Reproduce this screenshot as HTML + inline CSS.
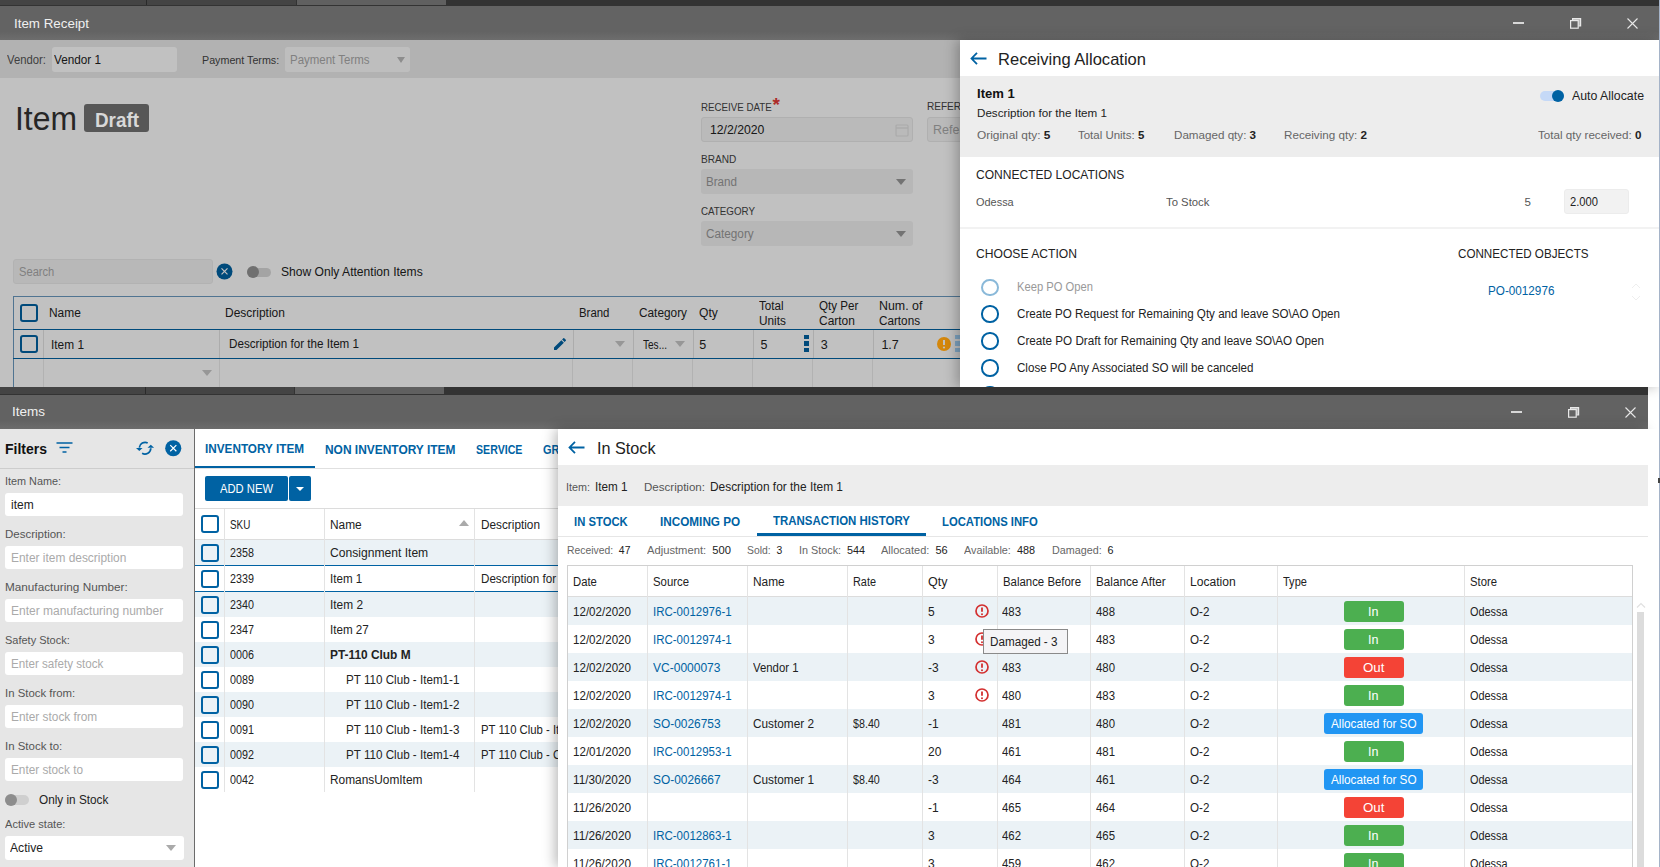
<!DOCTYPE html><html><head><meta charset="utf-8"><style>
*{box-sizing:border-box}
body{margin:0;width:1660px;height:867px;overflow:hidden;position:relative;background:#fff;font-family:"Liberation Sans",sans-serif}
.t{position:absolute;white-space:nowrap}
.b{position:absolute}
</style></head><body><div class="b" style="left:0px;top:0px;width:1660px;height:6px;background:#333"></div>
<div class="b" style="left:0px;top:0px;width:296px;height:5px;background:#444"></div>
<div class="b" style="left:146px;top:0px;width:1px;height:5px;background:#2a2a2a"></div>
<div class="b" style="left:297px;top:0px;width:149px;height:5px;background:#606060"></div>
<div class="b" style="left:0px;top:6px;width:1659px;height:34px;background:linear-gradient(#636363 0,#636363 75%,#6d6d6d 100%)"></div>
<div id="x1" class="t" style="left:13.5px;top:14.0px;font-size:13.5px;color:#f0f0f0;font-weight:normal;line-height:20px;transform:scaleX(0.9897);transform-origin:0 0;">Item Receipt</div>
<div class="b" style="left:1513px;top:21.5px;width:11px;height:2px;background:#d8d8d8"></div>
<svg class="b" style="left:1570px;top:18px" width="12" height="12" viewBox="0 0 12 12"><path d="M2.6 2.6V0.6h8v7.4H8.4" fill="#b8b8b8" stroke="#e8e8e8" stroke-width="1.2"/><rect x="0.6" y="2.6" width="7.6" height="7.6" fill="#646464" stroke="#e8e8e8" stroke-width="1.2"/></svg>
<svg class="b" style="left:1627px;top:17.5px" width="11" height="11" viewBox="0 0 11 11"><path d="M0.5 0.5L10.5 10.5M10.5 0.5L0.5 10.5" stroke="#e8e8e8" stroke-width="1.1"/></svg>
<div class="b" style="left:0;top:40px;width:1660px;height:347px;overflow:hidden;background:#fff">
<div class="b" style="left:0px;top:0px;width:960px;height:38px;background:#ececec"></div>
<div id="x2" class="t" style="left:7px;top:9.5px;font-size:12px;color:#555;font-weight:normal;line-height:20px;transform:scaleX(0.9426);transform-origin:0 0;">Vendor:</div>
<div class="b" style="left:52px;top:7px;width:125px;height:25px;background:#fff;border-radius:3px"></div>
<div id="x3" class="t" style="left:54px;top:9.5px;font-size:12.5px;color:#222;font-weight:normal;line-height:20px;transform:scaleX(0.9391);transform-origin:0 0;">Vendor 1</div>
<div id="x4" class="t" style="left:202.4px;top:9.5px;font-size:11.5px;color:#444;font-weight:normal;line-height:20px;transform:scaleX(0.9315);transform-origin:0 0;">Payment Terms:</div>
<div class="b" style="left:285px;top:7px;width:125px;height:25px;background:#fcfcfc;border-radius:3px"></div>
<div id="x5" class="t" style="left:290px;top:9.5px;font-size:12.5px;color:#aaa;font-weight:normal;line-height:20px;transform:scaleX(0.9179);transform-origin:0 0;">Payment Terms</div>
<div class="b" style="left:396.5px;top:17px;width:0;height:0;border-left:4.5px solid transparent;border-right:4.5px solid transparent;border-top:6px solid #bbb"></div>
<div id="x6" class="t" style="left:14.5px;top:57.8px;font-size:34px;color:#333;font-weight:normal;line-height:40px;transform:scaleX(0.9376);transform-origin:0 0;">Item</div>
<div id="x7" class="t" style="left:701px;top:57.0px;font-size:11.5px;color:#444;font-weight:normal;line-height:20px;transform:scaleX(0.8479);transform-origin:0 0;">RECEIVE DATE</div>
<div id="x8" class="t" style="left:772.5px;top:58.0px;font-size:19px;color:#e53935;font-weight:bold;line-height:14px;">*</div>
<div class="b" style="left:701px;top:77px;width:212px;height:25px;background:#f6f6f6;border:1px solid #e9e9e9;border-radius:3px"></div>
<div id="x9" class="t" style="left:710px;top:79.5px;font-size:12.5px;color:#222;font-weight:normal;line-height:20px;transform:scaleX(0.9783);transform-origin:0 0;">12/2/2020</div>
<svg class="b" style="left:895px;top:83px" width="14" height="14" viewBox="0 0 14 14"><rect x="1" y="2" width="12" height="11" rx="1" fill="none" stroke="#e2e2e2" stroke-width="1.2"/><path d="M1 5h12" stroke="#e2e2e2" stroke-width="1.5"/></svg>
<div id="x10" class="t" style="left:927px;top:56.0px;font-size:11.5px;color:#444;font-weight:normal;line-height:20px;transform:scaleX(0.8740);transform-origin:0 0;">REFERENCE</div>
<div class="b" style="left:927px;top:77px;width:200px;height:25px;background:#f6f6f6;border:1px solid #e9e9e9;border-radius:3px"></div>
<div id="x11" class="t" style="left:933px;top:79.5px;font-size:12.5px;color:#aaa;font-weight:normal;line-height:20px;">Reference</div>
<div id="x12" class="t" style="left:701px;top:109.0px;font-size:11.5px;color:#444;font-weight:normal;line-height:20px;transform:scaleX(0.8767);transform-origin:0 0;">BRAND</div>
<div class="b" style="left:701px;top:129px;width:212px;height:25px;background:#f2f2f2;border-radius:3px"></div>
<div id="x13" class="t" style="left:705.6px;top:131.5px;font-size:12.5px;color:#999;font-weight:normal;line-height:20px;transform:scaleX(0.9293);transform-origin:0 0;">Brand</div>
<div class="b" style="left:896px;top:139px;width:0;height:0;border-left:5.0px solid transparent;border-right:5.0px solid transparent;border-top:6px solid #999"></div>
<div id="x14" class="t" style="left:701px;top:161.0px;font-size:11.5px;color:#444;font-weight:normal;line-height:20px;transform:scaleX(0.8506);transform-origin:0 0;">CATEGORY</div>
<div class="b" style="left:701px;top:181px;width:212px;height:25px;background:#f2f2f2;border-radius:3px"></div>
<div id="x15" class="t" style="left:705.6px;top:183.5px;font-size:12.5px;color:#999;font-weight:normal;line-height:20px;transform:scaleX(0.9402);transform-origin:0 0;">Category</div>
<div class="b" style="left:896px;top:191px;width:0;height:0;border-left:5.0px solid transparent;border-right:5.0px solid transparent;border-top:6px solid #999"></div>
<div class="b" style="left:13px;top:219px;width:200px;height:25px;background:#f4f4f4;border:1px solid #ececec;border-radius:3px"></div>
<div id="x16" class="t" style="left:19px;top:221.5px;font-size:12.5px;color:#aaa;font-weight:normal;line-height:20px;transform:scaleX(0.8912);transform-origin:0 0;">Search</div>
<svg class="b" style="left:215.5px;top:222.5px" width="17" height="17" viewBox="0 0 17 17"><circle cx="8.5" cy="8.5" r="8" fill="#0062a3"/><path d="M5.5 5.3l6 6M11.5 5.3l-6 6" stroke="#fff" stroke-width="1.2"/></svg>
<div class="b" style="left:247px;top:227.5px;width:24px;height:9px;background:#d9d9d9;border-radius:5px"></div>
<div class="b" style="left:247px;top:225.5px;width:12px;height:12px;border-radius:50%;background:#959595"></div>
<div id="x17" class="t" style="left:281px;top:221.5px;font-size:12px;color:#222;font-weight:normal;line-height:20px;transform:scaleX(1.0067);transform-origin:0 0;">Show Only Attention Items</div>
<div class="b" style="left:13px;top:256px;width:960px;height:1px;background:#6a9ac0"></div>
<div class="b" style="left:13px;top:256px;width:1px;height:91px;background:#6a9ac0"></div>
<div class="b" style="left:13px;top:289px;width:960px;height:1px;background:#0062a3"></div>
<div class="b" style="left:13px;top:318px;width:960px;height:1px;background:#0062a3"></div>
<div class="b" style="left:20px;top:264px;width:18px;height:18px;border:2px solid #0062a3;border-radius:3px"></div>
<div class="b" style="left:20px;top:295px;width:18px;height:18px;border:2px solid #0062a3;border-radius:3px"></div>
<div id="x18" class="t" style="left:49.2px;top:263.0px;font-size:12.5px;color:#222;font-weight:normal;line-height:20px;transform:scaleX(0.9537);transform-origin:0 0;">Name</div>
<div id="x19" class="t" style="left:225px;top:263.0px;font-size:12.5px;color:#222;font-weight:normal;line-height:20px;transform:scaleX(0.9579);transform-origin:0 0;">Description</div>
<div id="x20" class="t" style="left:579.2px;top:263.0px;font-size:12.5px;color:#222;font-weight:normal;line-height:20px;transform:scaleX(0.9113);transform-origin:0 0;">Brand</div>
<div id="x21" class="t" style="left:639px;top:263.0px;font-size:12.5px;color:#222;font-weight:normal;line-height:20px;transform:scaleX(0.9461);transform-origin:0 0;">Category</div>
<div id="x22" class="t" style="left:699px;top:263.0px;font-size:12.5px;color:#222;font-weight:normal;line-height:20px;transform:scaleX(0.9664);transform-origin:0 0;">Qty</div>
<div id="x23" class="t" style="left:759px;top:255.5px;font-size:12.5px;color:#222;font-weight:normal;line-height:20px;transform:scaleX(0.9316);transform-origin:0 0;">Total</div>
<div id="x24" class="t" style="left:759px;top:271.0px;font-size:12.5px;color:#222;font-weight:normal;line-height:20px;transform:scaleX(0.9444);transform-origin:0 0;">Units</div>
<div id="x25" class="t" style="left:819px;top:255.5px;font-size:12.5px;color:#222;font-weight:normal;line-height:20px;transform:scaleX(0.9274);transform-origin:0 0;">Qty Per</div>
<div id="x26" class="t" style="left:819px;top:271.0px;font-size:12.5px;color:#222;font-weight:normal;line-height:20px;transform:scaleX(0.9565);transform-origin:0 0;">Carton</div>
<div id="x27" class="t" style="left:879px;top:255.5px;font-size:12.5px;color:#222;font-weight:normal;line-height:20px;transform:scaleX(0.9916);transform-origin:0 0;">Num. of</div>
<div id="x28" class="t" style="left:879px;top:271.0px;font-size:12.5px;color:#222;font-weight:normal;line-height:20px;transform:scaleX(0.9365);transform-origin:0 0;">Cartons</div>
<div class="b" style="left:43px;top:290px;width:1px;height:28px;background:#e3e3e3"></div>
<div class="b" style="left:43px;top:319px;width:1px;height:28px;background:#ececec"></div>
<div class="b" style="left:219px;top:290px;width:1px;height:28px;background:#e3e3e3"></div>
<div class="b" style="left:219px;top:319px;width:1px;height:28px;background:#ececec"></div>
<div class="b" style="left:573px;top:290px;width:1px;height:28px;background:#e3e3e3"></div>
<div class="b" style="left:572px;top:319px;width:1px;height:28px;background:#ececec"></div>
<div class="b" style="left:633px;top:290px;width:1px;height:28px;background:#e3e3e3"></div>
<div class="b" style="left:632px;top:319px;width:1px;height:28px;background:#ececec"></div>
<div class="b" style="left:693px;top:290px;width:1px;height:28px;background:#e3e3e3"></div>
<div class="b" style="left:692px;top:319px;width:1px;height:28px;background:#ececec"></div>
<div class="b" style="left:753px;top:290px;width:1px;height:28px;background:#e3e3e3"></div>
<div class="b" style="left:752px;top:319px;width:1px;height:28px;background:#ececec"></div>
<div class="b" style="left:813px;top:290px;width:1px;height:28px;background:#e3e3e3"></div>
<div class="b" style="left:812px;top:319px;width:1px;height:28px;background:#ececec"></div>
<div class="b" style="left:873px;top:290px;width:1px;height:28px;background:#e3e3e3"></div>
<div class="b" style="left:872px;top:319px;width:1px;height:28px;background:#ececec"></div>
<div id="x29" class="t" style="left:51.4px;top:294.5px;font-size:12.5px;color:#222;font-weight:normal;line-height:20px;transform:scaleX(0.9496);transform-origin:0 0;">Item 1</div>
<div id="x30" class="t" style="left:228.5px;top:294.0px;font-size:12px;color:#222;font-weight:normal;line-height:20px;transform:scaleX(0.9697);transform-origin:0 0;">Description for the Item 1</div>
<svg class="b" style="left:552px;top:296px" width="16" height="16" viewBox="0 0 24 24"><path d="M3 17.25V21h3.75L17.81 9.94l-3.75-3.75L3 17.25zM20.71 7.04a1 1 0 000-1.41l-2.34-2.34a1 1 0 00-1.41 0l-1.83 1.83 3.75 3.75 1.83-1.83z" fill="#0062a3"/></svg>
<div class="b" style="left:614.5px;top:301px;width:0;height:0;border-left:5.0px solid transparent;border-right:5.0px solid transparent;border-top:6.5px solid #c8c8c8"></div>
<div id="x31" class="t" style="left:642.5px;top:294.5px;font-size:12.5px;color:#222;font-weight:normal;line-height:20px;transform:scaleX(0.8033);transform-origin:0 0;">Tes...</div>
<div class="b" style="left:674.5px;top:301px;width:0;height:0;border-left:5.0px solid transparent;border-right:5.0px solid transparent;border-top:6.5px solid #c8c8c8"></div>
<div id="x32" class="t" style="left:699.2px;top:294.5px;font-size:12.5px;color:#222;font-weight:normal;line-height:20px;">5</div>
<div id="x33" class="t" style="left:760.5px;top:294.5px;font-size:12.5px;color:#222;font-weight:normal;line-height:20px;">5</div>
<div class="b" style="left:804px;top:294.5px;width:5px;height:4.5px;background:#0062a3"></div>
<div class="b" style="left:804px;top:301.2px;width:5px;height:4.5px;background:#0062a3"></div>
<div class="b" style="left:804px;top:307.9px;width:5px;height:4.5px;background:#0062a3"></div>
<div id="x34" class="t" style="left:820.7px;top:294.5px;font-size:12.5px;color:#222;font-weight:normal;line-height:20px;">3</div>
<div id="x35" class="t" style="left:881.4px;top:294.5px;font-size:12.5px;color:#222;font-weight:normal;line-height:20px;">1.7</div>
<div class="b" style="left:202px;top:330px;width:0;height:0;border-left:5.0px solid transparent;border-right:5.0px solid transparent;border-top:6.5px solid #c8c8c8"></div>
</div>
<div class="b" style="left:0px;top:40px;width:1660px;height:347px;background:rgba(0,0,0,0.243)"></div>
<div class="b" style="left:84px;top:104px;width:65px;height:28px;background:#575757;border-radius:3px"></div>
<div id="x36" class="t" style="left:94.8px;top:105.5px;font-size:20px;color:#d8d8d8;font-weight:bold;line-height:28px;transform:scaleX(0.9428);transform-origin:0 0;">Draft</div>
<svg class="b" style="left:936.5px;top:336.5px" width="14" height="14" viewBox="0 0 14 14"><circle cx="7" cy="7" r="7" fill="#d4870c"/><path d="M7 3v5" stroke="#c1c1c1" stroke-width="2"/><circle cx="7" cy="10.5" r="1.1" fill="#c1c1c1"/></svg>
<div class="b" style="left:955px;top:334.5px;width:5px;height:4.5px;background:#7ea3c0"></div>
<div class="b" style="left:955px;top:341.2px;width:5px;height:4.5px;background:#7ea3c0"></div>
<div class="b" style="left:955px;top:347.9px;width:5px;height:4.5px;background:#7ea3c0"></div>
<div class="b" style="left:960px;top:40px;width:700px;height:347px;background:#fff;box-shadow:-3px 0 12px rgba(0,0,0,0.28);overflow:hidden">
<svg class="b" style="left:10px;top:12.4px" width="17" height="13" viewBox="0 0 17 13"><path d="M16.5 6.5H1.8M7 0.8L1.5 6.5l5.5 5.7" fill="none" stroke="#0062a3" stroke-width="1.8"/></svg>
<div id="x37" class="t" style="left:38.4px;top:9.0px;font-size:16.5px;color:#222;font-weight:normal;line-height:20px;transform:scaleX(1.0022);transform-origin:0 0;">Receiving Allocation</div>
<div class="b" style="left:0px;top:36px;width:700px;height:81px;background:#ededed"></div>
<div id="x38" class="t" style="left:16.5px;top:44.3px;font-size:13.5px;color:#111;font-weight:bold;line-height:20px;transform:scaleX(0.9685);transform-origin:0 0;">Item 1</div>
<div id="x39" class="t" style="left:16.5px;top:62.5px;font-size:11.6px;color:#222;font-weight:normal;line-height:20px;transform:scaleX(1.0036);transform-origin:0 0;">Description for the Item 1</div>
<div id="x40" class="t" style="left:16.5px;top:84.5px;font-size:11.5px;color:#666;font-weight:normal;line-height:20px;transform:scaleX(1.0343);transform-origin:0 0;">Original qty: <b style="color:#222">5</b></div>
<div id="x41" class="t" style="left:118.3px;top:84.5px;font-size:11.5px;color:#666;font-weight:normal;line-height:20px;transform:scaleX(0.9972);transform-origin:0 0;">Total Units: <b style="color:#222">5</b></div>
<div id="x42" class="t" style="left:213.6px;top:84.5px;font-size:11.5px;color:#666;font-weight:normal;line-height:20px;transform:scaleX(1.0110);transform-origin:0 0;">Damaged qty: <b style="color:#222">3</b></div>
<div id="x43" class="t" style="left:324px;top:84.5px;font-size:11.5px;color:#666;font-weight:normal;line-height:20px;transform:scaleX(1.0141);transform-origin:0 0;">Receiving qty: <b style="color:#222">2</b></div>
<div id="x44" class="t" style="left:577.5px;top:84.5px;font-size:11.5px;color:#666;font-weight:normal;line-height:20px;transform:scaleX(1.0108);transform-origin:0 0;">Total qty received: <b style="color:#222">0</b></div>
<div class="b" style="left:580px;top:50.5px;width:24px;height:10px;background:#c5d9f7;border-radius:5px"></div>
<div class="b" style="left:591.5px;top:49.5px;width:12px;height:12px;border-radius:50%;background:#0062a3"></div>
<div id="x45" class="t" style="left:612px;top:45.5px;font-size:12.5px;color:#222;font-weight:normal;line-height:20px;transform:scaleX(0.9867);transform-origin:0 0;">Auto Allocate</div>
<div id="x46" class="t" style="left:16px;top:124.5px;font-size:12.5px;color:#222;font-weight:normal;line-height:20px;transform:scaleX(0.9633);transform-origin:0 0;">CONNECTED LOCATIONS</div>
<div id="x47" class="t" style="left:16px;top:152.0px;font-size:11.5px;color:#555;font-weight:normal;line-height:20px;transform:scaleX(0.9510);transform-origin:0 0;">Odessa</div>
<div id="x48" class="t" style="left:206.4px;top:152.0px;font-size:11.5px;color:#555;font-weight:normal;line-height:20px;transform:scaleX(0.9839);transform-origin:0 0;">To Stock</div>
<div id="x49" class="t" style="left:564.6px;top:152.0px;font-size:11.5px;color:#555;font-weight:normal;line-height:20px;">5</div>
<div class="b" style="left:603.6px;top:149px;width:65px;height:25px;background:#f2f2f2;border:1px solid #ececec;border-radius:3px"></div>
<div id="x50" class="t" style="left:610px;top:152.0px;font-size:12px;color:#222;font-weight:normal;line-height:20px;transform:scaleX(0.9324);transform-origin:0 0;">2.000</div>
<div class="b" style="left:0px;top:187px;width:700px;height:2px;background:#f2f2f2"></div>
<div id="x51" class="t" style="left:16.4px;top:203.5px;font-size:12.5px;color:#222;font-weight:normal;line-height:20px;transform:scaleX(0.9694);transform-origin:0 0;">CHOOSE ACTION</div>
<div id="x52" class="t" style="left:498.2px;top:203.5px;font-size:12.5px;color:#222;font-weight:normal;line-height:20px;transform:scaleX(0.9302);transform-origin:0 0;">CONNECTED OBJECTS</div>
<div class="b" style="left:21.4px;top:238.6px;width:17.2px;height:17.2px;border-radius:50%;border:2px solid #8ab9d9"></div>
<div id="x53" class="t" style="left:56.6px;top:237.2px;font-size:12px;color:#999;font-weight:normal;line-height:20px;transform:scaleX(0.9338);transform-origin:0 0;">Keep PO Open</div>
<div class="b" style="left:21.4px;top:265.4px;width:17.2px;height:17.2px;border-radius:50%;border:2px solid #0062a3"></div>
<div id="x54" class="t" style="left:56.6px;top:264.0px;font-size:12px;color:#222;font-weight:normal;line-height:20px;transform:scaleX(0.9666);transform-origin:0 0;">Create PO Request for Remaining Qty and leave SO\AO Open</div>
<div class="b" style="left:21.4px;top:292.4px;width:17.2px;height:17.2px;border-radius:50%;border:2px solid #0062a3"></div>
<div id="x55" class="t" style="left:56.6px;top:291.0px;font-size:12px;color:#222;font-weight:normal;line-height:20px;transform:scaleX(0.9731);transform-origin:0 0;">Create PO Draft for Remaining Qty and leave SO\AO Open</div>
<div class="b" style="left:21.4px;top:319.4px;width:17.2px;height:17.2px;border-radius:50%;border:2px solid #0062a3"></div>
<div id="x56" class="t" style="left:56.6px;top:318.0px;font-size:12px;color:#222;font-weight:normal;line-height:20px;transform:scaleX(0.9661);transform-origin:0 0;">Close PO Any Associated SO will be canceled</div>
<div class="b" style="left:21.4px;top:346.4px;width:17.2px;height:17.2px;border-radius:50%;border:2px solid #0062a3"></div>
<div id="x57" class="t" style="left:528.4px;top:240.5px;font-size:12.5px;color:#0062a3;font-weight:normal;line-height:20px;transform:scaleX(0.9367);transform-origin:0 0;">PO-0012976</div>
<svg class="b" style="left:671px;top:242px" width="10" height="20" viewBox="0 0 10 20"><path d="M1 6l4-4 4 4M1 14l4 4 4-4" fill="none" stroke="#eee" stroke-width="1"/></svg>
</div>
<div class="b" style="left:1659px;top:0px;width:1px;height:867px;background:#a5b3c8"></div>
<div class="b" style="left:0px;top:387px;width:1648px;height:8px;background:#333"></div>
<div class="b" style="left:0px;top:387px;width:145px;height:7px;background:#444"></div>
<div class="b" style="left:145px;top:387px;width:149px;height:7px;background:#444;border-left:1px solid #2a2a2a"></div>
<div class="b" style="left:295px;top:387px;width:149px;height:7px;background:#606060"></div>
<div class="b" style="left:0px;top:395px;width:1648px;height:34px;background:linear-gradient(#626262 0,#626262 75%,#6c6c6c 100%)"></div>
<div id="x58" class="t" style="left:11.5px;top:402.0px;font-size:13.5px;color:#f0f0f0;font-weight:normal;line-height:20px;transform:scaleX(0.9995);transform-origin:0 0;">Items</div>
<div class="b" style="left:1511px;top:410.5px;width:11px;height:2px;background:#d8d8d8"></div>
<svg class="b" style="left:1568px;top:407px" width="12" height="12" viewBox="0 0 12 12"><path d="M2.6 2.6V0.6h8v7.4H8.4" fill="#b8b8b8" stroke="#e8e8e8" stroke-width="1.2"/><rect x="0.6" y="2.6" width="7.6" height="7.6" fill="#646464" stroke="#e8e8e8" stroke-width="1.2"/></svg>
<svg class="b" style="left:1625px;top:406.5px" width="11" height="11" viewBox="0 0 11 11"><path d="M0.5 0.5L10.5 10.5M10.5 0.5L0.5 10.5" stroke="#e8e8e8" stroke-width="1.1"/></svg>
<div class="b" style="left:0px;top:429px;width:194px;height:438px;background:#e6e6e6"></div>
<div class="b" style="left:194px;top:429px;width:1px;height:438px;background:#6b6b6b"></div>
<div id="x59" class="t" style="left:5px;top:438.7px;font-size:15.5px;color:#111;font-weight:bold;line-height:20px;transform:scaleX(0.9029);transform-origin:0 0;">Filters</div>
<svg class="b" style="left:56px;top:442px" width="17" height="11" viewBox="0 0 17 11"><path d="M0.5 1h16M3.5 5.5h10M6.5 10h4" stroke="#0062a3" stroke-width="1.7"/></svg>
<svg class="b" style="left:130px;top:436px" width="26" height="26" viewBox="0 0 26 26"><path d="M17.7 6.9A5.9 5.9 0 0 0 9.3 11.6M12.1 17.3A5.9 5.9 0 0 0 20.8 12.2" fill="none" stroke="#0062a3" stroke-width="1.7"/><path d="M6 12.1h6.6l-3.3 3z M17.5 11.7h6.6l-3.3-3z" fill="#0062a3"/></svg>
<svg class="b" style="left:165px;top:440px" width="16.5" height="16.5" viewBox="0 0 17 17"><circle cx="8.5" cy="8.5" r="8.3" fill="#0062a3"/><path d="M5.4 5.3l6.3 6.3M11.7 5.3l-6.3 6.3" stroke="#fff" stroke-width="1.2"/></svg>
<div class="b" style="left:0px;top:468px;width:194px;height:1px;background:#cdcdcd"></div>
<div id="x60" class="t" style="left:5px;top:471.0px;font-size:11.5px;color:#555;font-weight:normal;line-height:20px;transform:scaleX(0.9422);transform-origin:0 0;">Item Name:</div>
<div class="b" style="left:5px;top:493px;width:178px;height:23px;background:#fff;border-radius:3px"></div>
<div id="x61" class="t" style="left:11px;top:494.5px;font-size:12.5px;color:#222;font-weight:normal;line-height:20px;transform:scaleX(0.9566);transform-origin:0 0;">item</div>
<div id="x62" class="t" style="left:5px;top:524.0px;font-size:11.5px;color:#555;font-weight:normal;line-height:20px;transform:scaleX(0.9997);transform-origin:0 0;">Description:</div>
<div class="b" style="left:5px;top:546px;width:178px;height:23px;background:#fff;border-radius:3px"></div>
<div id="x63" class="t" style="left:11px;top:547.5px;font-size:12.5px;color:#aaa;font-weight:normal;line-height:20px;transform:scaleX(0.9538);transform-origin:0 0;">Enter item description</div>
<div id="x64" class="t" style="left:5px;top:577.0px;font-size:11.5px;color:#555;font-weight:normal;line-height:20px;transform:scaleX(1.0210);transform-origin:0 0;">Manufacturing Number:</div>
<div class="b" style="left:5px;top:599px;width:178px;height:23px;background:#fff;border-radius:3px"></div>
<div id="x65" class="t" style="left:11px;top:600.5px;font-size:12.5px;color:#aaa;font-weight:normal;line-height:20px;transform:scaleX(0.9607);transform-origin:0 0;">Enter manufacturing number</div>
<div id="x66" class="t" style="left:5px;top:630.0px;font-size:11.5px;color:#555;font-weight:normal;line-height:20px;transform:scaleX(0.9548);transform-origin:0 0;">Safety Stock:</div>
<div class="b" style="left:5px;top:652px;width:178px;height:23px;background:#fff;border-radius:3px"></div>
<div id="x67" class="t" style="left:11px;top:653.5px;font-size:12.5px;color:#aaa;font-weight:normal;line-height:20px;transform:scaleX(0.9300);transform-origin:0 0;">Enter safety stock</div>
<div id="x68" class="t" style="left:5px;top:683.0px;font-size:11.5px;color:#555;font-weight:normal;line-height:20px;transform:scaleX(0.9896);transform-origin:0 0;">In Stock from:</div>
<div class="b" style="left:5px;top:705px;width:178px;height:23px;background:#fff;border-radius:3px"></div>
<div id="x69" class="t" style="left:11px;top:706.5px;font-size:12.5px;color:#aaa;font-weight:normal;line-height:20px;transform:scaleX(0.9473);transform-origin:0 0;">Enter stock from</div>
<div id="x70" class="t" style="left:5px;top:736.0px;font-size:11.5px;color:#555;font-weight:normal;line-height:20px;transform:scaleX(0.9960);transform-origin:0 0;">In Stock to:</div>
<div class="b" style="left:5px;top:758px;width:178px;height:23px;background:#fff;border-radius:3px"></div>
<div id="x71" class="t" style="left:11px;top:759.5px;font-size:12.5px;color:#aaa;font-weight:normal;line-height:20px;transform:scaleX(0.9419);transform-origin:0 0;">Enter stock to</div>
<div class="b" style="left:5px;top:795px;width:24px;height:10px;background:#cfcfcf;border-radius:5px"></div>
<div class="b" style="left:5px;top:793.5px;width:12px;height:12px;border-radius:50%;background:#8d8d8d"></div>
<div id="x72" class="t" style="left:39.4px;top:789.5px;font-size:12.5px;color:#222;font-weight:normal;line-height:20px;transform:scaleX(0.9411);transform-origin:0 0;">Only in Stock</div>
<div id="x73" class="t" style="left:5.2px;top:814.0px;font-size:11.5px;color:#555;font-weight:normal;line-height:20px;transform:scaleX(0.9642);transform-origin:0 0;">Active state:</div>
<div class="b" style="left:5px;top:836px;width:179px;height:24px;background:#fff;border-radius:3px"></div>
<div id="x74" class="t" style="left:10.2px;top:838.0px;font-size:12.5px;color:#222;font-weight:normal;line-height:20px;transform:scaleX(0.9693);transform-origin:0 0;">Active</div>
<div class="b" style="left:166px;top:845px;width:0;height:0;border-left:5.0px solid transparent;border-right:5.0px solid transparent;border-top:6px solid #aaa"></div>
<div class="b" style="left:195px;top:429px;width:363px;height:438px;background:#fff"></div>
<div id="x75" class="t" style="left:205.2px;top:439.0px;font-size:12.5px;color:#0062a3;font-weight:bold;line-height:20px;transform:scaleX(0.9398);transform-origin:0 0;">INVENTORY ITEM</div>
<div id="x76" class="t" style="left:325.2px;top:439.5px;font-size:12.5px;color:#0062a3;font-weight:bold;line-height:20px;transform:scaleX(0.9547);transform-origin:0 0;">NON INVENTORY ITEM</div>
<div id="x77" class="t" style="left:476px;top:439.5px;font-size:12.5px;color:#0062a3;font-weight:bold;line-height:20px;transform:scaleX(0.8489);transform-origin:0 0;">SERVICE</div>
<div id="x78" class="t" style="left:542.7px;top:439.5px;font-size:12.5px;color:#0062a3;font-weight:bold;line-height:20px;transform:scaleX(0.8725);transform-origin:0 0;">GROUP</div>
<div class="b" style="left:195px;top:468px;width:363px;height:1px;background:#e0e0e0"></div>
<div class="b" style="left:195px;top:466px;width:120px;height:2px;background:#0062a3"></div>
<div class="b" style="left:205px;top:476px;width:83px;height:25px;background:#0062a3;border-radius:2px"></div>
<div id="x79" class="t" style="left:220px;top:478.5px;font-size:12.5px;color:#fff;font-weight:normal;line-height:20px;transform:scaleX(0.8978);transform-origin:0 0;">ADD NEW</div>
<div class="b" style="left:289px;top:476px;width:22px;height:25px;background:#0062a3;border-radius:2px"></div>
<div class="b" style="left:296.2px;top:486.5px;width:0;height:0;border-left:4.0px solid transparent;border-right:4.0px solid transparent;border-top:4.5px solid #fff"></div>
<div class="b" style="left:195px;top:508px;width:363px;height:1px;background:#dcdcdc"></div>
<div class="b" style="left:195px;top:539px;width:363px;height:1px;background:#dcdcdc"></div>
<div class="b" style="left:201px;top:515px;width:18px;height:18px;border:2px solid #0062a3;border-radius:3px"></div>
<div id="x80" class="t" style="left:230.3px;top:515.0px;font-size:12.5px;color:#222;font-weight:normal;line-height:20px;transform:scaleX(0.7898);transform-origin:0 0;">SKU</div>
<div id="x81" class="t" style="left:330.3px;top:515.0px;font-size:12.5px;color:#222;font-weight:normal;line-height:20px;transform:scaleX(0.9507);transform-origin:0 0;">Name</div>
<div class="b" style="left:459px;top:520px;width:0;height:0;border-left:5.0px solid transparent;border-right:5.0px solid transparent;border-bottom:6px solid #aaa"></div>
<div id="x82" class="t" style="left:480.5px;top:515.0px;font-size:12.5px;color:#222;font-weight:normal;line-height:20px;transform:scaleX(0.9435);transform-origin:0 0;">Description</div>
<div class="b" style="left:195px;top:540px;width:363px;height:25px;background:#ebf2f6"></div>
<div class="b" style="left:201px;top:544px;width:18px;height:18px;border:2px solid #0062a3;border-radius:3px"></div>
<div id="x83" class="t" style="left:230.3px;top:542.5px;font-size:12px;color:#222;font-weight:normal;line-height:20px;transform:scaleX(0.8950);transform-origin:0 0;">2358</div>
<div id="x84" class="t" style="left:330.3px;top:542.5px;font-size:12.5px;color:#222;font-weight:normal;line-height:20px;transform:scaleX(0.9681);transform-origin:0 0;">Consignment Item</div>
<div class="b" style="left:201px;top:570px;width:18px;height:18px;border:2px solid #0062a3;border-radius:3px"></div>
<div id="x85" class="t" style="left:230.3px;top:568.5px;font-size:12px;color:#222;font-weight:normal;line-height:20px;transform:scaleX(0.8950);transform-origin:0 0;">2339</div>
<div id="x86" class="t" style="left:330.3px;top:568.5px;font-size:12.5px;color:#222;font-weight:normal;line-height:20px;transform:scaleX(0.9266);transform-origin:0 0;">Item 1</div>
<div id="x87" class="t" style="left:480.5px;top:568.5px;font-size:12.5px;color:#222;font-weight:normal;line-height:20px;transform:scaleX(0.9309);transform-origin:0 0;">Description for the Item 1</div>
<div class="b" style="left:195px;top:592px;width:363px;height:25px;background:#ebf2f6"></div>
<div class="b" style="left:201px;top:596px;width:18px;height:18px;border:2px solid #0062a3;border-radius:3px"></div>
<div id="x88" class="t" style="left:230.3px;top:594.5px;font-size:12px;color:#222;font-weight:normal;line-height:20px;transform:scaleX(0.8950);transform-origin:0 0;">2340</div>
<div id="x89" class="t" style="left:330.3px;top:594.5px;font-size:12.5px;color:#222;font-weight:normal;line-height:20px;transform:scaleX(0.9496);transform-origin:0 0;">Item 2</div>
<div class="b" style="left:201px;top:621px;width:18px;height:18px;border:2px solid #0062a3;border-radius:3px"></div>
<div id="x90" class="t" style="left:230.3px;top:619.5px;font-size:12px;color:#222;font-weight:normal;line-height:20px;transform:scaleX(0.8950);transform-origin:0 0;">2347</div>
<div id="x91" class="t" style="left:330.3px;top:619.5px;font-size:12.5px;color:#222;font-weight:normal;line-height:20px;transform:scaleX(0.9307);transform-origin:0 0;">Item 27</div>
<div class="b" style="left:195px;top:642px;width:363px;height:25px;background:#ebf2f6"></div>
<div class="b" style="left:201px;top:646px;width:18px;height:18px;border:2px solid #0062a3;border-radius:3px"></div>
<div id="x92" class="t" style="left:230.3px;top:644.5px;font-size:12px;color:#222;font-weight:normal;line-height:20px;transform:scaleX(0.8950);transform-origin:0 0;">0006</div>
<div id="x93" class="t" style="left:330.3px;top:644.5px;font-size:12.5px;color:#222;font-weight:bold;line-height:20px;transform:scaleX(0.9510);transform-origin:0 0;">PT-110 Club M</div>
<div class="b" style="left:201px;top:671px;width:18px;height:18px;border:2px solid #0062a3;border-radius:3px"></div>
<div id="x94" class="t" style="left:230.3px;top:669.5px;font-size:12px;color:#222;font-weight:normal;line-height:20px;transform:scaleX(0.8950);transform-origin:0 0;">0089</div>
<div id="x95" class="t" style="left:346.3px;top:669.5px;font-size:12.5px;color:#222;font-weight:normal;line-height:20px;transform:scaleX(0.9308);transform-origin:0 0;">PT 110 Club - Item1-1</div>
<div class="b" style="left:195px;top:692px;width:363px;height:25px;background:#ebf2f6"></div>
<div class="b" style="left:201px;top:696px;width:18px;height:18px;border:2px solid #0062a3;border-radius:3px"></div>
<div id="x96" class="t" style="left:230.3px;top:694.5px;font-size:12px;color:#222;font-weight:normal;line-height:20px;transform:scaleX(0.8950);transform-origin:0 0;">0090</div>
<div id="x97" class="t" style="left:346.3px;top:694.5px;font-size:12.5px;color:#222;font-weight:normal;line-height:20px;transform:scaleX(0.9308);transform-origin:0 0;">PT 110 Club - Item1-2</div>
<div class="b" style="left:201px;top:721px;width:18px;height:18px;border:2px solid #0062a3;border-radius:3px"></div>
<div id="x98" class="t" style="left:230.3px;top:719.5px;font-size:12px;color:#222;font-weight:normal;line-height:20px;transform:scaleX(0.8950);transform-origin:0 0;">0091</div>
<div id="x99" class="t" style="left:346.3px;top:719.5px;font-size:12.5px;color:#222;font-weight:normal;line-height:20px;transform:scaleX(0.9308);transform-origin:0 0;">PT 110 Club - Item1-3</div>
<div id="x100" class="t" style="left:480.5px;top:719.5px;font-size:12.5px;color:#222;font-weight:normal;line-height:20px;transform:scaleX(0.9050);transform-origin:0 0;">PT 110 Club - Item1-3</div>
<div class="b" style="left:195px;top:742px;width:363px;height:25px;background:#ebf2f6"></div>
<div class="b" style="left:201px;top:746px;width:18px;height:18px;border:2px solid #0062a3;border-radius:3px"></div>
<div id="x101" class="t" style="left:230.3px;top:744.5px;font-size:12px;color:#222;font-weight:normal;line-height:20px;transform:scaleX(0.8950);transform-origin:0 0;">0092</div>
<div id="x102" class="t" style="left:346.3px;top:744.5px;font-size:12.5px;color:#222;font-weight:normal;line-height:20px;transform:scaleX(0.9308);transform-origin:0 0;">PT 110 Club - Item1-4</div>
<div id="x103" class="t" style="left:480.5px;top:744.5px;font-size:12.5px;color:#222;font-weight:normal;line-height:20px;transform:scaleX(0.9050);transform-origin:0 0;">PT 110 Club - Club</div>
<div class="b" style="left:201px;top:771px;width:18px;height:18px;border:2px solid #0062a3;border-radius:3px"></div>
<div id="x104" class="t" style="left:230.3px;top:769.5px;font-size:12px;color:#222;font-weight:normal;line-height:20px;transform:scaleX(0.8950);transform-origin:0 0;">0042</div>
<div id="x105" class="t" style="left:330.3px;top:769.5px;font-size:12.5px;color:#222;font-weight:normal;line-height:20px;transform:scaleX(0.9501);transform-origin:0 0;">RomansUomItem</div>
<div class="b" style="left:195px;top:565px;width:363px;height:1px;background:#0062a3"></div>
<div class="b" style="left:195px;top:591px;width:363px;height:1px;background:#0062a3"></div>
<div class="b" style="left:224px;top:509px;width:1px;height:283px;background:#e3e3e3"></div>
<div class="b" style="left:324px;top:509px;width:1px;height:283px;background:#e3e3e3"></div>
<div class="b" style="left:474px;top:509px;width:1px;height:283px;background:#e3e3e3"></div>
<div class="b" style="left:558px;top:429px;width:1090px;height:438px;background:#fff;box-shadow:-3px 0 12px rgba(0,0,0,0.28);overflow:hidden">
<svg class="b" style="left:10px;top:12.4px" width="17" height="13" viewBox="0 0 17 13"><path d="M16.5 6.5H1.8M7 0.8L1.5 6.5l5.5 5.7" fill="none" stroke="#0062a3" stroke-width="1.8"/></svg>
<div id="x106" class="t" style="left:38.6px;top:8.8px;font-size:16.5px;color:#222;font-weight:normal;line-height:20px;transform:scaleX(0.9828);transform-origin:0 0;">In Stock</div>
<div class="b" style="left:0px;top:36px;width:1090px;height:41px;background:#ededed"></div>
<div id="x107" class="t" style="left:8.3px;top:48.0px;font-size:11.5px;color:#555;font-weight:normal;line-height:20px;transform:scaleX(0.9350);transform-origin:0 0;">Item:</div>
<div id="x108" class="t" style="left:37px;top:48.0px;font-size:12.5px;color:#222;font-weight:normal;line-height:20px;transform:scaleX(0.9353);transform-origin:0 0;">Item 1</div>
<div id="x109" class="t" style="left:86.3px;top:48.0px;font-size:11.5px;color:#555;font-weight:normal;line-height:20px;transform:scaleX(1.0046);transform-origin:0 0;">Description:</div>
<div id="x110" class="t" style="left:152.2px;top:48.0px;font-size:12.5px;color:#222;font-weight:normal;line-height:20px;transform:scaleX(0.9523);transform-origin:0 0;">Description for the Item 1</div>
<div id="x111" class="t" style="left:16.4px;top:82.5px;font-size:12.5px;color:#0062a3;font-weight:bold;line-height:20px;transform:scaleX(0.9025);transform-origin:0 0;">IN STOCK</div>
<div id="x112" class="t" style="left:102.3px;top:82.5px;font-size:12.5px;color:#0062a3;font-weight:bold;line-height:20px;transform:scaleX(0.9389);transform-origin:0 0;">INCOMING PO</div>
<div id="x113" class="t" style="left:215px;top:82.0px;font-size:12px;color:#0062a3;font-weight:bold;line-height:20px;transform:scaleX(0.9550);transform-origin:0 0;">TRANSACTION HISTORY</div>
<div id="x114" class="t" style="left:384px;top:82.5px;font-size:12.5px;color:#0062a3;font-weight:bold;line-height:20px;transform:scaleX(0.9036);transform-origin:0 0;">LOCATIONS INFO</div>
<div class="b" style="left:0px;top:107px;width:1090px;height:1px;background:#e6e6e6"></div>
<div class="b" style="left:199px;top:104px;width:169px;height:3px;background:#0062a3"></div>
<div id="x115" class="t" style="left:9.3px;top:110.5px;font-size:11.5px;color:#666;font-weight:normal;line-height:20px;transform:scaleX(0.9015);transform-origin:0 0;">Received:&nbsp; <span style="color:#222">47</span></div>
<div id="x116" class="t" style="left:89px;top:110.5px;font-size:11.5px;color:#666;font-weight:normal;line-height:20px;transform:scaleX(0.9732);transform-origin:0 0;">Adjustment:&nbsp; <span style="color:#222">500</span></div>
<div id="x117" class="t" style="left:189.3px;top:110.5px;font-size:11.5px;color:#666;font-weight:normal;line-height:20px;transform:scaleX(0.9022);transform-origin:0 0;">Sold:&nbsp; <span style="color:#222">3</span></div>
<div id="x118" class="t" style="left:240.8px;top:110.5px;font-size:11.5px;color:#666;font-weight:normal;line-height:20px;transform:scaleX(0.9399);transform-origin:0 0;">In Stock:&nbsp; <span style="color:#222">544</span></div>
<div id="x119" class="t" style="left:323.3px;top:110.5px;font-size:11.5px;color:#666;font-weight:normal;line-height:20px;transform:scaleX(0.9569);transform-origin:0 0;">Allocated:&nbsp; <span style="color:#222">56</span></div>
<div id="x120" class="t" style="left:406px;top:110.5px;font-size:11.5px;color:#666;font-weight:normal;line-height:20px;transform:scaleX(0.9437);transform-origin:0 0;">Available:&nbsp; <span style="color:#222">488</span></div>
<div id="x121" class="t" style="left:493.7px;top:110.5px;font-size:11.5px;color:#666;font-weight:normal;line-height:20px;transform:scaleX(0.9353);transform-origin:0 0;">Damaged:&nbsp; <span style="color:#222">6</span></div>
</div>
<div class="b" style="left:567px;top:565px;width:1066px;height:1px;background:#d0d0d0"></div>
<div class="b" style="left:567px;top:596px;width:1066px;height:1px;background:#dcdcdc"></div>
<div class="b" style="left:567px;top:565px;width:1px;height:302px;background:#d0d0d0"></div>
<div class="b" style="left:1632px;top:565px;width:1px;height:302px;background:#d0d0d0"></div>
<div id="x122" class="t" style="left:573px;top:572.0px;font-size:12.5px;color:#222;font-weight:normal;line-height:20px;transform:scaleX(0.9051);transform-origin:0 0;">Date</div>
<div id="x123" class="t" style="left:653px;top:572.0px;font-size:12.5px;color:#222;font-weight:normal;line-height:20px;transform:scaleX(0.9089);transform-origin:0 0;">Source</div>
<div id="x124" class="t" style="left:753px;top:572.0px;font-size:12.5px;color:#222;font-weight:normal;line-height:20px;transform:scaleX(0.9507);transform-origin:0 0;">Name</div>
<div id="x125" class="t" style="left:853px;top:572.0px;font-size:12.5px;color:#222;font-weight:normal;line-height:20px;transform:scaleX(0.8710);transform-origin:0 0;">Rate</div>
<div id="x126" class="t" style="left:928px;top:572.0px;font-size:12.5px;color:#222;font-weight:normal;line-height:20px;transform:scaleX(1.0024);transform-origin:0 0;">Qty</div>
<div id="x127" class="t" style="left:1003px;top:572.0px;font-size:12.5px;color:#222;font-weight:normal;line-height:20px;transform:scaleX(0.9124);transform-origin:0 0;">Balance Before</div>
<div id="x128" class="t" style="left:1096px;top:572.0px;font-size:12.5px;color:#222;font-weight:normal;line-height:20px;transform:scaleX(0.9360);transform-origin:0 0;">Balance After</div>
<div id="x129" class="t" style="left:1190px;top:572.0px;font-size:12.5px;color:#222;font-weight:normal;line-height:20px;transform:scaleX(0.9669);transform-origin:0 0;">Location</div>
<div id="x130" class="t" style="left:1283px;top:572.0px;font-size:12.5px;color:#222;font-weight:normal;line-height:20px;transform:scaleX(0.8816);transform-origin:0 0;">Type</div>
<div id="x131" class="t" style="left:1470px;top:572.0px;font-size:12.5px;color:#222;font-weight:normal;line-height:20px;transform:scaleX(0.9033);transform-origin:0 0;">Store</div>
<div class="b" style="left:568px;top:597px;width:1064px;height:28px;background:#ebf2f6"></div>
<div id="x132" class="t" style="left:573px;top:601.8px;font-size:12px;color:#222;font-weight:normal;line-height:20px;transform:scaleX(0.9657);transform-origin:0 0;">12/02/2020</div>
<div id="x133" class="t" style="left:652.5px;top:601.8px;font-size:12.5px;color:#0062a3;font-weight:normal;line-height:20px;transform:scaleX(0.9196);transform-origin:0 0;">IRC-0012976-1</div>
<div id="x134" class="t" style="left:928px;top:601.8px;font-size:12px;color:#222;font-weight:normal;line-height:20px;">5</div>
<svg class="b" style="left:974.5px;top:604.2px" width="14" height="14" viewBox="0 0 14 14"><circle cx="7" cy="7" r="6" fill="none" stroke="#d32f2f" stroke-width="1.7"/><path d="M7 3.6v4.2" stroke="#d32f2f" stroke-width="1.8"/><circle cx="7" cy="10.2" r="1" fill="#d32f2f"/></svg>
<div id="x135" class="t" style="left:1002px;top:601.8px;font-size:12px;color:#222;font-weight:normal;line-height:20px;transform:scaleX(0.9485);transform-origin:0 0;">483</div>
<div id="x136" class="t" style="left:1095.8px;top:601.8px;font-size:12px;color:#222;font-weight:normal;line-height:20px;transform:scaleX(0.9485);transform-origin:0 0;">488</div>
<div id="x137" class="t" style="left:1190.3px;top:601.8px;font-size:12.5px;color:#222;font-weight:normal;line-height:20px;transform:scaleX(0.9307);transform-origin:0 0;">O-2</div>
<div class="b" style="left:1343.5px;top:600.5px;width:60px;height:21px;background:#4caf50;border-radius:3px"></div>
<div id="x138" class="t" style="left:1368.25px;top:601.8px;font-size:12.5px;color:#fff;font-weight:normal;line-height:20px;transform:scaleX(1.0060);transform-origin:0 0;">In</div>
<div id="x139" class="t" style="left:1470.3px;top:601.8px;font-size:12.5px;color:#222;font-weight:normal;line-height:20px;transform:scaleX(0.8702);transform-origin:0 0;">Odessa</div>
<div id="x140" class="t" style="left:573px;top:629.8px;font-size:12px;color:#222;font-weight:normal;line-height:20px;transform:scaleX(0.9657);transform-origin:0 0;">12/02/2020</div>
<div id="x141" class="t" style="left:652.5px;top:629.8px;font-size:12.5px;color:#0062a3;font-weight:normal;line-height:20px;transform:scaleX(0.9196);transform-origin:0 0;">IRC-0012974-1</div>
<div id="x142" class="t" style="left:928px;top:629.8px;font-size:12px;color:#222;font-weight:normal;line-height:20px;">3</div>
<svg class="b" style="left:974.5px;top:632.2px" width="14" height="14" viewBox="0 0 14 14"><circle cx="7" cy="7" r="6" fill="none" stroke="#d32f2f" stroke-width="1.7"/><path d="M7 3.6v4.2" stroke="#d32f2f" stroke-width="1.8"/><circle cx="7" cy="10.2" r="1" fill="#d32f2f"/></svg>
<div id="x143" class="t" style="left:1095.8px;top:629.8px;font-size:12px;color:#222;font-weight:normal;line-height:20px;transform:scaleX(0.9485);transform-origin:0 0;">483</div>
<div id="x144" class="t" style="left:1190.3px;top:629.8px;font-size:12.5px;color:#222;font-weight:normal;line-height:20px;transform:scaleX(0.9307);transform-origin:0 0;">O-2</div>
<div class="b" style="left:1343.5px;top:628.5px;width:60px;height:21px;background:#4caf50;border-radius:3px"></div>
<div id="x145" class="t" style="left:1368.25px;top:629.8px;font-size:12.5px;color:#fff;font-weight:normal;line-height:20px;transform:scaleX(1.0060);transform-origin:0 0;">In</div>
<div id="x146" class="t" style="left:1470.3px;top:629.8px;font-size:12.5px;color:#222;font-weight:normal;line-height:20px;transform:scaleX(0.8702);transform-origin:0 0;">Odessa</div>
<div class="b" style="left:568px;top:653px;width:1064px;height:28px;background:#ebf2f6"></div>
<div id="x147" class="t" style="left:573px;top:657.8px;font-size:12px;color:#222;font-weight:normal;line-height:20px;transform:scaleX(0.9657);transform-origin:0 0;">12/02/2020</div>
<div id="x148" class="t" style="left:652.5px;top:657.8px;font-size:12.5px;color:#0062a3;font-weight:normal;line-height:20px;transform:scaleX(0.9615);transform-origin:0 0;">VC-0000073</div>
<div id="x149" class="t" style="left:753px;top:657.8px;font-size:12.5px;color:#222;font-weight:normal;line-height:20px;transform:scaleX(0.9091);transform-origin:0 0;">Vendor 1</div>
<div id="x150" class="t" style="left:928px;top:657.8px;font-size:12px;color:#222;font-weight:normal;line-height:20px;">-3</div>
<svg class="b" style="left:974.5px;top:660.2px" width="14" height="14" viewBox="0 0 14 14"><circle cx="7" cy="7" r="6" fill="none" stroke="#d32f2f" stroke-width="1.7"/><path d="M7 3.6v4.2" stroke="#d32f2f" stroke-width="1.8"/><circle cx="7" cy="10.2" r="1" fill="#d32f2f"/></svg>
<div id="x151" class="t" style="left:1002px;top:657.8px;font-size:12px;color:#222;font-weight:normal;line-height:20px;transform:scaleX(0.9485);transform-origin:0 0;">483</div>
<div id="x152" class="t" style="left:1095.8px;top:657.8px;font-size:12px;color:#222;font-weight:normal;line-height:20px;transform:scaleX(0.9485);transform-origin:0 0;">480</div>
<div id="x153" class="t" style="left:1190.3px;top:657.8px;font-size:12.5px;color:#222;font-weight:normal;line-height:20px;transform:scaleX(0.9307);transform-origin:0 0;">O-2</div>
<div class="b" style="left:1343.5px;top:656.5px;width:60px;height:21px;background:#f44336;border-radius:3px"></div>
<div id="x154" class="t" style="left:1362.75px;top:657.8px;font-size:12.5px;color:#fff;font-weight:normal;line-height:20px;transform:scaleX(1.0667);transform-origin:0 0;">Out</div>
<div id="x155" class="t" style="left:1470.3px;top:657.8px;font-size:12.5px;color:#222;font-weight:normal;line-height:20px;transform:scaleX(0.8702);transform-origin:0 0;">Odessa</div>
<div id="x156" class="t" style="left:573px;top:685.8px;font-size:12px;color:#222;font-weight:normal;line-height:20px;transform:scaleX(0.9657);transform-origin:0 0;">12/02/2020</div>
<div id="x157" class="t" style="left:652.5px;top:685.8px;font-size:12.5px;color:#0062a3;font-weight:normal;line-height:20px;transform:scaleX(0.9196);transform-origin:0 0;">IRC-0012974-1</div>
<div id="x158" class="t" style="left:928px;top:685.8px;font-size:12px;color:#222;font-weight:normal;line-height:20px;">3</div>
<svg class="b" style="left:974.5px;top:688.2px" width="14" height="14" viewBox="0 0 14 14"><circle cx="7" cy="7" r="6" fill="none" stroke="#d32f2f" stroke-width="1.7"/><path d="M7 3.6v4.2" stroke="#d32f2f" stroke-width="1.8"/><circle cx="7" cy="10.2" r="1" fill="#d32f2f"/></svg>
<div id="x159" class="t" style="left:1002px;top:685.8px;font-size:12px;color:#222;font-weight:normal;line-height:20px;transform:scaleX(0.9485);transform-origin:0 0;">480</div>
<div id="x160" class="t" style="left:1095.8px;top:685.8px;font-size:12px;color:#222;font-weight:normal;line-height:20px;transform:scaleX(0.9485);transform-origin:0 0;">483</div>
<div id="x161" class="t" style="left:1190.3px;top:685.8px;font-size:12.5px;color:#222;font-weight:normal;line-height:20px;transform:scaleX(0.9307);transform-origin:0 0;">O-2</div>
<div class="b" style="left:1343.5px;top:684.5px;width:60px;height:21px;background:#4caf50;border-radius:3px"></div>
<div id="x162" class="t" style="left:1368.25px;top:685.8px;font-size:12.5px;color:#fff;font-weight:normal;line-height:20px;transform:scaleX(1.0060);transform-origin:0 0;">In</div>
<div id="x163" class="t" style="left:1470.3px;top:685.8px;font-size:12.5px;color:#222;font-weight:normal;line-height:20px;transform:scaleX(0.8702);transform-origin:0 0;">Odessa</div>
<div class="b" style="left:568px;top:709px;width:1064px;height:28px;background:#ebf2f6"></div>
<div id="x164" class="t" style="left:573px;top:713.8px;font-size:12px;color:#222;font-weight:normal;line-height:20px;transform:scaleX(0.9657);transform-origin:0 0;">12/02/2020</div>
<div id="x165" class="t" style="left:652.5px;top:713.8px;font-size:12.5px;color:#0062a3;font-weight:normal;line-height:20px;transform:scaleX(0.9522);transform-origin:0 0;">SO-0026753</div>
<div id="x166" class="t" style="left:753px;top:713.8px;font-size:12.5px;color:#222;font-weight:normal;line-height:20px;transform:scaleX(0.9441);transform-origin:0 0;">Customer 2</div>
<div id="x167" class="t" style="left:853px;top:713.8px;font-size:12.5px;color:#222;font-weight:normal;line-height:20px;transform:scaleX(0.8567);transform-origin:0 0;">$8.40</div>
<div id="x168" class="t" style="left:928px;top:713.8px;font-size:12px;color:#222;font-weight:normal;line-height:20px;">-1</div>
<div id="x169" class="t" style="left:1002px;top:713.8px;font-size:12px;color:#222;font-weight:normal;line-height:20px;transform:scaleX(0.9485);transform-origin:0 0;">481</div>
<div id="x170" class="t" style="left:1095.8px;top:713.8px;font-size:12px;color:#222;font-weight:normal;line-height:20px;transform:scaleX(0.9485);transform-origin:0 0;">480</div>
<div id="x171" class="t" style="left:1190.3px;top:713.8px;font-size:12.5px;color:#222;font-weight:normal;line-height:20px;transform:scaleX(0.9307);transform-origin:0 0;">O-2</div>
<div class="b" style="left:1323.8px;top:712.5px;width:99.7px;height:21px;background:#2196f3;border-radius:3px"></div>
<div id="x172" class="t" style="left:1330.85px;top:713.8px;font-size:12.5px;color:#fff;font-weight:normal;line-height:20px;transform:scaleX(0.9405);transform-origin:0 0;">Allocated for SO</div>
<div id="x173" class="t" style="left:1470.3px;top:713.8px;font-size:12.5px;color:#222;font-weight:normal;line-height:20px;transform:scaleX(0.8702);transform-origin:0 0;">Odessa</div>
<div id="x174" class="t" style="left:573px;top:741.8px;font-size:12px;color:#222;font-weight:normal;line-height:20px;transform:scaleX(0.9657);transform-origin:0 0;">12/01/2020</div>
<div id="x175" class="t" style="left:652.5px;top:741.8px;font-size:12.5px;color:#0062a3;font-weight:normal;line-height:20px;transform:scaleX(0.9196);transform-origin:0 0;">IRC-0012953-1</div>
<div id="x176" class="t" style="left:928px;top:741.8px;font-size:12px;color:#222;font-weight:normal;line-height:20px;">20</div>
<div id="x177" class="t" style="left:1002px;top:741.8px;font-size:12px;color:#222;font-weight:normal;line-height:20px;transform:scaleX(0.9485);transform-origin:0 0;">461</div>
<div id="x178" class="t" style="left:1095.8px;top:741.8px;font-size:12px;color:#222;font-weight:normal;line-height:20px;transform:scaleX(0.9485);transform-origin:0 0;">481</div>
<div id="x179" class="t" style="left:1190.3px;top:741.8px;font-size:12.5px;color:#222;font-weight:normal;line-height:20px;transform:scaleX(0.9307);transform-origin:0 0;">O-2</div>
<div class="b" style="left:1343.5px;top:740.5px;width:60px;height:21px;background:#4caf50;border-radius:3px"></div>
<div id="x180" class="t" style="left:1368.25px;top:741.8px;font-size:12.5px;color:#fff;font-weight:normal;line-height:20px;transform:scaleX(1.0060);transform-origin:0 0;">In</div>
<div id="x181" class="t" style="left:1470.3px;top:741.8px;font-size:12.5px;color:#222;font-weight:normal;line-height:20px;transform:scaleX(0.8702);transform-origin:0 0;">Odessa</div>
<div class="b" style="left:568px;top:765px;width:1064px;height:28px;background:#ebf2f6"></div>
<div id="x182" class="t" style="left:573px;top:769.8px;font-size:12px;color:#222;font-weight:normal;line-height:20px;transform:scaleX(0.9802);transform-origin:0 0;">11/30/2020</div>
<div id="x183" class="t" style="left:652.5px;top:769.8px;font-size:12.5px;color:#0062a3;font-weight:normal;line-height:20px;transform:scaleX(0.9522);transform-origin:0 0;">SO-0026667</div>
<div id="x184" class="t" style="left:753px;top:769.8px;font-size:12.5px;color:#222;font-weight:normal;line-height:20px;transform:scaleX(0.9441);transform-origin:0 0;">Customer 1</div>
<div id="x185" class="t" style="left:853px;top:769.8px;font-size:12.5px;color:#222;font-weight:normal;line-height:20px;transform:scaleX(0.8567);transform-origin:0 0;">$8.40</div>
<div id="x186" class="t" style="left:928px;top:769.8px;font-size:12px;color:#222;font-weight:normal;line-height:20px;">-3</div>
<div id="x187" class="t" style="left:1002px;top:769.8px;font-size:12px;color:#222;font-weight:normal;line-height:20px;transform:scaleX(0.9485);transform-origin:0 0;">464</div>
<div id="x188" class="t" style="left:1095.8px;top:769.8px;font-size:12px;color:#222;font-weight:normal;line-height:20px;transform:scaleX(0.9485);transform-origin:0 0;">461</div>
<div id="x189" class="t" style="left:1190.3px;top:769.8px;font-size:12.5px;color:#222;font-weight:normal;line-height:20px;transform:scaleX(0.9307);transform-origin:0 0;">O-2</div>
<div class="b" style="left:1323.8px;top:768.5px;width:99.7px;height:21px;background:#2196f3;border-radius:3px"></div>
<div id="x190" class="t" style="left:1330.85px;top:769.8px;font-size:12.5px;color:#fff;font-weight:normal;line-height:20px;transform:scaleX(0.9405);transform-origin:0 0;">Allocated for SO</div>
<div id="x191" class="t" style="left:1470.3px;top:769.8px;font-size:12.5px;color:#222;font-weight:normal;line-height:20px;transform:scaleX(0.8702);transform-origin:0 0;">Odessa</div>
<div id="x192" class="t" style="left:573px;top:797.8px;font-size:12px;color:#222;font-weight:normal;line-height:20px;transform:scaleX(0.9802);transform-origin:0 0;">11/26/2020</div>
<div id="x193" class="t" style="left:928px;top:797.8px;font-size:12px;color:#222;font-weight:normal;line-height:20px;">-1</div>
<div id="x194" class="t" style="left:1002px;top:797.8px;font-size:12px;color:#222;font-weight:normal;line-height:20px;transform:scaleX(0.9485);transform-origin:0 0;">465</div>
<div id="x195" class="t" style="left:1095.8px;top:797.8px;font-size:12px;color:#222;font-weight:normal;line-height:20px;transform:scaleX(0.9485);transform-origin:0 0;">464</div>
<div id="x196" class="t" style="left:1190.3px;top:797.8px;font-size:12.5px;color:#222;font-weight:normal;line-height:20px;transform:scaleX(0.9307);transform-origin:0 0;">O-2</div>
<div class="b" style="left:1343.5px;top:796.5px;width:60px;height:21px;background:#f44336;border-radius:3px"></div>
<div id="x197" class="t" style="left:1362.75px;top:797.8px;font-size:12.5px;color:#fff;font-weight:normal;line-height:20px;transform:scaleX(1.0667);transform-origin:0 0;">Out</div>
<div id="x198" class="t" style="left:1470.3px;top:797.8px;font-size:12.5px;color:#222;font-weight:normal;line-height:20px;transform:scaleX(0.8702);transform-origin:0 0;">Odessa</div>
<div class="b" style="left:568px;top:821px;width:1064px;height:28px;background:#ebf2f6"></div>
<div id="x199" class="t" style="left:573px;top:825.8px;font-size:12px;color:#222;font-weight:normal;line-height:20px;transform:scaleX(0.9802);transform-origin:0 0;">11/26/2020</div>
<div id="x200" class="t" style="left:652.5px;top:825.8px;font-size:12.5px;color:#0062a3;font-weight:normal;line-height:20px;transform:scaleX(0.9196);transform-origin:0 0;">IRC-0012863-1</div>
<div id="x201" class="t" style="left:928px;top:825.8px;font-size:12px;color:#222;font-weight:normal;line-height:20px;">3</div>
<div id="x202" class="t" style="left:1002px;top:825.8px;font-size:12px;color:#222;font-weight:normal;line-height:20px;transform:scaleX(0.9485);transform-origin:0 0;">462</div>
<div id="x203" class="t" style="left:1095.8px;top:825.8px;font-size:12px;color:#222;font-weight:normal;line-height:20px;transform:scaleX(0.9485);transform-origin:0 0;">465</div>
<div id="x204" class="t" style="left:1190.3px;top:825.8px;font-size:12.5px;color:#222;font-weight:normal;line-height:20px;transform:scaleX(0.9307);transform-origin:0 0;">O-2</div>
<div class="b" style="left:1343.5px;top:824.5px;width:60px;height:21px;background:#4caf50;border-radius:3px"></div>
<div id="x205" class="t" style="left:1368.25px;top:825.8px;font-size:12.5px;color:#fff;font-weight:normal;line-height:20px;transform:scaleX(1.0060);transform-origin:0 0;">In</div>
<div id="x206" class="t" style="left:1470.3px;top:825.8px;font-size:12.5px;color:#222;font-weight:normal;line-height:20px;transform:scaleX(0.8702);transform-origin:0 0;">Odessa</div>
<div id="x207" class="t" style="left:573px;top:853.8px;font-size:12px;color:#222;font-weight:normal;line-height:20px;transform:scaleX(0.9802);transform-origin:0 0;">11/26/2020</div>
<div id="x208" class="t" style="left:652.5px;top:853.8px;font-size:12.5px;color:#0062a3;font-weight:normal;line-height:20px;transform:scaleX(0.9196);transform-origin:0 0;">IRC-0012761-1</div>
<div id="x209" class="t" style="left:928px;top:853.8px;font-size:12px;color:#222;font-weight:normal;line-height:20px;">3</div>
<div id="x210" class="t" style="left:1002px;top:853.8px;font-size:12px;color:#222;font-weight:normal;line-height:20px;transform:scaleX(0.9485);transform-origin:0 0;">459</div>
<div id="x211" class="t" style="left:1095.8px;top:853.8px;font-size:12px;color:#222;font-weight:normal;line-height:20px;transform:scaleX(0.9485);transform-origin:0 0;">462</div>
<div id="x212" class="t" style="left:1190.3px;top:853.8px;font-size:12.5px;color:#222;font-weight:normal;line-height:20px;transform:scaleX(0.9307);transform-origin:0 0;">O-2</div>
<div class="b" style="left:1343.5px;top:852.5px;width:60px;height:21px;background:#4caf50;border-radius:3px"></div>
<div id="x213" class="t" style="left:1368.25px;top:853.8px;font-size:12.5px;color:#fff;font-weight:normal;line-height:20px;transform:scaleX(1.0060);transform-origin:0 0;">In</div>
<div id="x214" class="t" style="left:1470.3px;top:853.8px;font-size:12.5px;color:#222;font-weight:normal;line-height:20px;transform:scaleX(0.8702);transform-origin:0 0;">Odessa</div>
<div class="b" style="left:647px;top:566px;width:1px;height:301px;background:#e3e3e3"></div>
<div class="b" style="left:747px;top:566px;width:1px;height:301px;background:#e3e3e3"></div>
<div class="b" style="left:847px;top:566px;width:1px;height:301px;background:#e3e3e3"></div>
<div class="b" style="left:922px;top:566px;width:1px;height:301px;background:#e3e3e3"></div>
<div class="b" style="left:997px;top:566px;width:1px;height:301px;background:#e3e3e3"></div>
<div class="b" style="left:1090px;top:566px;width:1px;height:301px;background:#e3e3e3"></div>
<div class="b" style="left:1184px;top:566px;width:1px;height:301px;background:#e3e3e3"></div>
<div class="b" style="left:1277px;top:566px;width:1px;height:301px;background:#e3e3e3"></div>
<div class="b" style="left:1464px;top:566px;width:1px;height:301px;background:#e3e3e3"></div>
<div class="b" style="left:1637px;top:612px;width:7px;height:255px;background:#dcdcdc"></div>
<svg class="b" style="left:1635.5px;top:602px" width="10" height="6" viewBox="0 0 10 6"><path d="M1 5.5l4-4 4 4" fill="none" stroke="#e0e0e0" stroke-width="1.2"/></svg>
<div class="b" style="left:983px;top:629px;width:85px;height:25px;background:#f4f4f6;border:1px solid #8a8a8a"></div>
<div id="x215" class="t" style="left:989.5px;top:631.5px;font-size:12.5px;color:#222;font-weight:normal;line-height:20px;transform:scaleX(0.9341);transform-origin:0 0;">Damaged - 3</div>
<div class="b" style="left:1648px;top:429px;width:11px;height:438px;background:#fff"></div>
<div class="b" style="left:1658px;top:478px;width:2px;height:5px;background:#444"></div></body></html>
